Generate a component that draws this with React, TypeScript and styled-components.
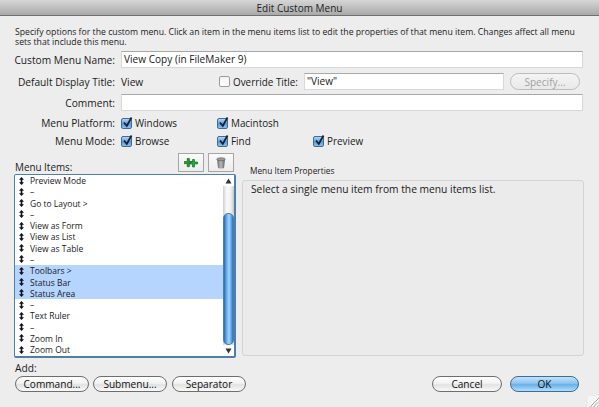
import React from "react";
import styled, { createGlobalStyle } from "styled-components";

const Global = createGlobalStyle`
  html, body { margin: 0; padding: 0; background: #ededed; }
  body { font-family: "Open Sans", "DejaVu Sans", sans-serif; color: #1a1a1a; }
  * { box-sizing: border-box; }
`;

const Window = styled.div`
  width: 599px; height: 407px; background: #ededed; position: relative; overflow: hidden;
  display: flex; flex-direction: column;
`;
const TitleBar = styled.div`
  height: 16px; flex: none;
  background: linear-gradient(#d6d6d6, #a9a9a9);
  border-bottom: 1px solid #6f6f6f;
  display: flex; align-items: center; justify-content: center;
  font-size: 10px; color: #222;
`;
const Body = styled.div`
  flex: 1; padding: 11px 15px 0 15px; display: flex; flex-direction: column;
`;
const Intro = styled.p`
  margin: 0; font-size: 8.7px; line-height: 10px; height: 20px; white-space: nowrap;
`;
const FormRow = styled.div<{ $h: number; $top?: number }>`
  display: flex; align-items: center; height: ${p => p.$h}px; margin-top: ${p => p.$top ?? 0}px;
`;
const Label = styled.div`
  width: 100px; flex: none; text-align: right; font-size: 10.2px; white-space: nowrap;
  display: flex; justify-content: flex-end;
`;
const Value = styled.div`
  margin-left: 6px; flex: none; font-size: 10.2px; width: 98px;
`;
const Input = styled.div<{ $w: number; $ml?: number }>`
  width: ${p => p.$w}px; height: 17px; margin-left: ${p => p.$ml ?? 6}px; flex: none;
  background: #fff; border: 1px solid #d8d8d8; border-top: 1px solid #a8a8a8;
  font-size: 10.1px; line-height: 15px; padding-left: 2px;
`;
const Check = styled.span<{ $on?: boolean }>`
  display: inline-flex; align-items: center; justify-content: center; flex: none;
  width: 11px; height: 11px; border-radius: 2px; position: relative;
  border: 1px solid ${p => (p.$on ? "#3f6c95" : "#9b9b9b")};
  background: ${p => (p.$on ? "linear-gradient(#b6d4ee, #5a9bd8 55%, #8ec0ea)" : "linear-gradient(#f2f2f2, #fff)")};
`;
const CheckField = styled.label<{ $w: number; $ml?: number }>`
  display: flex; align-items: center; gap: 3px; width: ${p => p.$w}px; font-size: 9.9px; flex: none;
  margin-left: ${p => p.$ml ?? 0}px;
`;
const TickMark = styled.svg`
  position: absolute; left: -1px; top: -3px;
`;
const Tick = () => (
  <TickMark width="13" height="13" viewBox="0 0 13 13">
    <path d="M3 6.5 L5.8 10 L10.5 1.5" fill="none" stroke="#12233a" strokeWidth="1.8" />
  </TickMark>
);
const Box = ({ label, w, ml, on = true }: { label: string; w: number; ml?: number; on?: boolean }) => (
  <CheckField $w={w} $ml={ml}>
    <Check $on={on}>{on && <Tick />}</Check>
    {label}
  </CheckField>
);
const Pill = styled.div<{ $w: number; $h?: number; $kind?: string; $ml?: number }>`
  width: ${p => p.$w}px; height: ${p => p.$h ?? 16}px; border-radius: 9px; flex: none;
  margin-left: ${p => p.$ml ?? 0}px;
  display: flex; align-items: center; justify-content: center; font-size: 10.1px;
  border: 1px solid ${p => (p.$kind === "ok" ? "#3d6d96" : p.$kind === "off" ? "#bdbdbd" : "#6e6e6e")};
  color: ${p => (p.$kind === "off" ? "#a2a2a2" : "#111")};
  background: ${p =>
    p.$kind === "ok"
      ? "linear-gradient(#c4e2f9 0%, #8cc4ef 45%, #69b0ea 55%, #b4e0fb 100%)"
      : p.$kind === "off"
      ? "linear-gradient(#f4f4f4, #e9e9e9)"
      : "linear-gradient(#ffffff 0%, #f2f2f2 45%, #e2e2e2 55%, #fafafa 100%)"};
`;
const Main = styled.div`
  display: flex; margin-top: 5px; height: 203px;
`;
const Left = styled.div`
  width: 222px; flex: none; display: flex; flex-direction: column; margin-left: -1px;
`;
const ListHead = styled.div`
  height: 21px; display: flex; align-items: flex-end; font-size: 9.9px; padding-left: 1px;
`;
const IconBtn = styled.div<{ $ml: number }>`
  width: 26px; height: 19px; margin-left: ${p => p.$ml}px; margin-bottom: 2px;
  border: 1px solid #a5a5a5; background: linear-gradient(#fafafa, #ececec);
  display: flex; align-items: center; justify-content: center;
`;
const HeadLabel = styled.span`
  width: 163px; flex: none;
`;
const ListBox = styled.div`
  width: 222px; height: 184px; flex: none; border: 1px solid #4f7fa6; border-width: 1px 2px 2px 1px;
  border-radius: 2px; background: #fff; display: flex; overflow: hidden;
`;
const Rows = styled.div`
  flex: 1; overflow: hidden;
`;
const ItemRow = styled.div<{ $sel?: boolean }>`
  height: 11.27px; display: flex; align-items: center; font-size: 8.5px; line-height: 11px; white-space: nowrap;
  background: ${p => (p.$sel ? "#b5d5ff" : "transparent")}; padding-left: 4px;
`;
const ItemText = styled.span`
  margin-left: 6px;
`;
const HandleIcon = styled.svg`
  flex: none;
`;
const Scroll = styled.div`
  width: 11px; flex: none; display: flex; flex-direction: column; align-items: stretch;
  background: linear-gradient(90deg, #d4d4d4, #fff 40%, #f6f6f6 70%, #cfcfcf);
`;
const ArrowCell = styled.div`
  height: 11px; flex: none; background: #fff; display: flex; align-items: center; justify-content: center;
  font-size: 0;
`;
const TrackCap = styled.div`
  flex: none; height: 26px; margin-top: 1px; border-radius: 6px 6px 0 0;
  background: linear-gradient(90deg, #cfcfcf, #fafafa 35%, #f0f0f0 70%, #c6c6c6);
`;
const Thumb = styled.div`
  flex: none; height: 132px; border-radius: 5px;
  background: linear-gradient(90deg, #2a69b4, #66aeee 30%, #a6d6fa 55%, #4f9ae6 85%, #2e6fbb);
  border: 1px solid #4d7ea8;
`;
const TrackEnd = styled.div`
  flex: 1;
`;
const Panel = styled.div`
  margin-left: 6px; width: 342px; display: flex; flex-direction: column; padding-top: 12px;
`;
const Legend = styled.div`
  font-size: 8.3px; height: 11px; line-height: 11px; padding-left: 8px; white-space: nowrap;
`;
const PanelBox = styled.div`
  height: 182px; margin-top: 4px; border: 1px solid #d3d3d3; border-radius: 3px; background: #ebebeb;
  font-size: 10.25px; padding: 1px 8px; white-space: nowrap;
`;
const AddLabel = styled.div`
  font-size: 10.2px; margin-top: 6px; height: 12px; line-height: 12px;
`;
const Footer = styled.div`
  display: flex; margin-top: 2px; align-items: center;
`;
const Grip = styled.div`
  position: absolute; right: 0; bottom: 0; width: 11px; height: 11px; background: #f6f6f6;
  display: flex;
`;

const Handle = () => (
  <HandleIcon width="5" height="8" viewBox="0 0 5 8">
    <path d="M2.5 0 L5 2.8 H0 Z M2.500 8 L0 5.200 H5 Z" fill="#111" />
    <rect x="1.700" y="2" width="1.600" height="4" fill="#111" />
  </HandleIcon>
);
const items: [string, boolean?][] = [
  ["Preview Mode"], ["–"], ["Go to Layout >"], ["–"], ["View as Form"], ["View as List"], ["View as Table"], ["–"],
  ["Toolbars >", true], ["Status Bar", true], ["Status Area", true], ["–"], ["Text Ruler"], ["–"], ["Zoom In"], ["Zoom Out"],
];

export default function App() {
  return (
    <Window>
      <Global />
      <TitleBar>Edit Custom Menu</TitleBar>
      <Body>
        <Intro>
          Specify options for the custom menu. Click an item in the menu items list to edit the properties of that menu item. Changes affect all menu
          <br />
          sets that include this menu.
        </Intro>
        <FormRow $h={17} $top={4}>
          <Label>Custom Menu Name:</Label>
          <Input $w={462}>View Copy (in FileMaker 9)</Input>
        </FormRow>
        <FormRow $h={17} $top={5}>
          <Label>Default Display Title:</Label>
          <Value>View</Value>
          <Box label="Override Title:" w={85} on={false} />
          <Input $w={200} $ml={0}>"View"</Input>
          <Pill $w={70} $h={17} $kind="off" $ml={6}>Specify...</Pill>
        </FormRow>
        <FormRow $h={17} $top={4}>
          <Label>Comment:</Label>
          <Input $w={462} />
        </FormRow>
        <FormRow $h={14} $top={5}>
          <Label>Menu Platform:</Label>
          <Box label="Windows" w={96} ml={6} />
          <Box label="Macintosh" w={90} />
        </FormRow>
        <FormRow $h={14} $top={4}>
          <Label>Menu Mode:</Label>
          <Box label="Browse" w={96} ml={6} />
          <Box label="Find" w={96} />
          <Box label="Preview" w={80} />
        </FormRow>
        <Main>
          <Left>
            <ListHead>
              <HeadLabel>Menu Items:</HeadLabel>
              <IconBtn $ml={0}>
                <svg width="14" height="12" viewBox="0 0 14 12">
                  <path d="M3.2 1.5h2.2v3h3v2.2h-3v3H3.200v-3h-3V4.500h3z" fill="#17a02b" stroke="#0b5a18" strokeWidth=".6" />
                  <path d="M8.500 2.500h2v2.500h3v2h-3v3h-2V7h-2.500V5h2.500z" fill="#1db336" stroke="#0b5a18" strokeWidth=".6" />
                </svg>
              </IconBtn>
              <IconBtn $ml={4}>
                <svg width="10" height="12" viewBox="0 0 10 12">
                  <defs>
                    <linearGradient id="can" x1="0" x2="1" y1="0" y2="0">
                      <stop offset="0" stopColor="#6a6a6a" />
                      <stop offset=".5" stopColor="#b8b8b8" />
                      <stop offset="1" stopColor="#5e5e5e" />
                    </linearGradient>
                  </defs>
                  <path d="M1 2.500 L2 11 Q5 12 8 11 L9 2.500Z" fill="url(#can)" />
                  <ellipse cx="5" cy="2.200" rx="4.300" ry="1.500" fill="#9a9a9a" stroke="#4e4e4e" strokeWidth=".5" />
                </svg>
              </IconBtn>
            </ListHead>
            <ListBox>
              <Rows>
                {items.map(([t, s], i) => (
                  <ItemRow key={i} $sel={s}>
                    <Handle />
                    <ItemText>{t}</ItemText>
                  </ItemRow>
                ))}
              </Rows>
              <Scroll>
                <ArrowCell>
                  <svg width="7" height="6" viewBox="0 0 7 6"><path d="M3.500 0.500L6.500 5.500H.5Z" fill="#333" /></svg>
                </ArrowCell>
                <TrackCap />
                <Thumb />
                <TrackEnd />
                <ArrowCell>
                  <svg width="7" height="6" viewBox="0 0 7 6"><path d="M3.500 5.500L.5 .5H6.500Z" fill="#333" /></svg>
                </ArrowCell>
              </Scroll>
            </ListBox>
          </Left>
          <Panel>
            <Legend>Menu Item Properties</Legend>
            <PanelBox>Select a single menu item from the menu items list.</PanelBox>
          </Panel>
        </Main>
        <AddLabel>Add:</AddLabel>
        <Footer>
          <Pill $w={74}>Command...</Pill>
          <Pill $w={74} $ml={4}>Submenu...</Pill>
          <Pill $w={74} $ml={5}>Separator</Pill>
          <Pill $w={70} $ml={186}>Cancel</Pill>
          <Pill $w={69} $ml={8} $kind="ok">OK</Pill>
        </Footer>
      </Body>
      <Grip>
        <svg width="11" height="11" viewBox="0 0 11 11">
          <path d="M2 11L11 2M5.500 11L11 5.500M9 11L11 9" stroke="#8f8f8f" strokeWidth=".8" />
        </svg>
      </Grip>
    </Window>
  );
}
